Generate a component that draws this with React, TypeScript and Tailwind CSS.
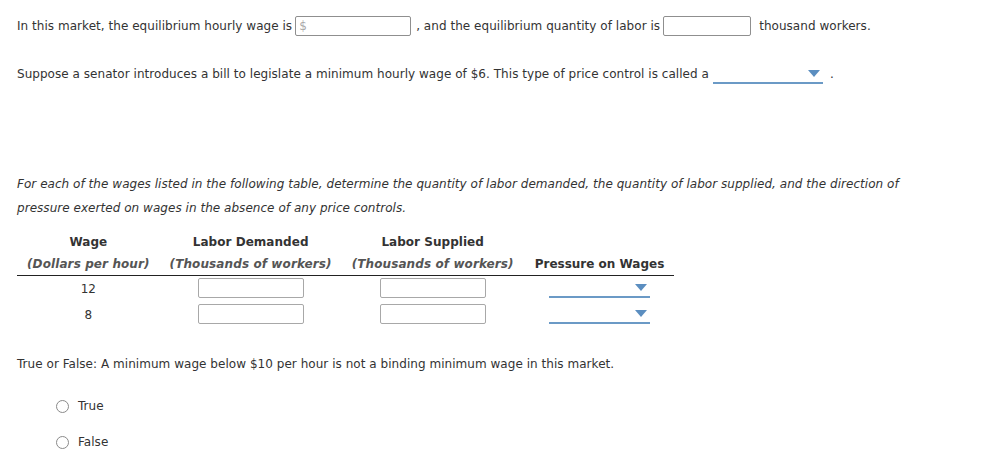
import React from 'react';

function Caret() {
  return (
    <svg width="12" height="7" viewBox="0 0 12 7" className="block">
      <path d="M0 0 L12 0 L6 7 Z" fill="#5b8ec0" />
    </svg>
  );
}

function Dropdown({ width }: { width: string }) {
  return (
    <div className={`relative h-[20px] ${width} border-b-2 border-[#6b9ac6]`}>
      <div className="absolute right-[3px] top-[6px]">
        <Caret />
      </div>
    </div>
  );
}

function Radio({ label }: { label: string }) {
  return (
    <label className="flex items-center h-[20px] pl-[39px]">
      <span className="inline-block w-[13px] h-[13px] rounded-full border border-[#8a8a8a] bg-white" />
      <span className="ml-[9px]">{label}</span>
    </label>
  );
}

export default function App() {
  return (
    <div
      className="min-h-screen bg-white text-[12px] text-[#333] pl-[17px] tracking-[0.04px]"
      style={{ fontFamily: '"DejaVu Sans", Verdana, sans-serif' }}
    >
      <div className="flex items-center h-[20px] mt-[16px] whitespace-nowrap">
        <span>In this market, the equilibrium hourly wage is</span>
        <div className="ml-[3px] w-[116px] h-[20px] border border-[#8f8f8f] rounded-[2px] flex items-center pl-[3px] text-[#aaa]">
          $
        </div>
        <span className="ml-[5px]">, and the equilibrium quantity of labor is</span>
        <div className="ml-[3px] w-[88px] h-[20px] border border-[#8f8f8f] rounded-[2px]" />
        <span className="ml-[8px]">thousand workers.</span>
      </div>

      <div className="flex items-center h-[20px] mt-[28px] whitespace-nowrap">
        <span>Suppose a senator introduces a bill to legislate a minimum hourly wage of $6. This type of price control is called a</span>
        <div className="ml-[4px]">
          <Dropdown width="w-[110px]" />
        </div>
        <span className="ml-[7px]">.</span>
      </div>

      <p className="mt-[88px] italic leading-[24px] text-[#333] pr-[60px]">
        For each of the wages listed in the following table, determine the quantity of labor demanded, the quantity of labor supplied, and the direction of pressure exerted on wages in the absence of any price controls.
      </p>

      <table className="mt-[11px] border-collapse">
        <thead>
          <tr className="h-[22px]">
            <th className="px-[10px] font-bold text-center">Wage</th>
            <th className="px-[10px] font-bold text-center">Labor Demanded</th>
            <th className="px-[10px] font-bold text-center">Labor Supplied</th>
            <th className="px-[10px]" />
          </tr>
          <tr className="h-[22px] border-b border-[#222]">
            <th className="px-[10px] font-bold italic text-[#555] whitespace-nowrap tracking-[0.1px]">(Dollars per hour)</th>
            <th className="px-[10px] font-bold italic text-[#555] whitespace-nowrap tracking-[0.1px]">(Thousands of workers)</th>
            <th className="px-[10px] font-bold italic text-[#555] whitespace-nowrap tracking-[0.1px]">(Thousands of workers)</th>
            <th className="pl-[11px] pr-[10px] font-bold whitespace-nowrap tracking-normal">Pressure on Wages</th>
          </tr>
        </thead>
        <tbody>
          {['12', '8'].map((w) => (
            <tr key={w} className="h-[26px]">
              <td className="text-center pt-[1px]">{w}</td>
              <td>
                <div className="mx-auto w-[106px] h-[20px] border border-[#a8a8a8] rounded-[2px]" />
              </td>
              <td>
                <div className="mx-auto w-[106px] h-[20px] border border-[#a8a8a8] rounded-[2px]" />
              </td>
              <td>
                <div className="mx-auto w-[101px]">
                  <Dropdown width="w-[101px]" />
                </div>
              </td>
            </tr>
          ))}
        </tbody>
      </table>

      <div className="flex items-center h-[20px] mt-[27px]">
        True or False: A minimum wage below $10 per hour is not a binding minimum wage in this market.
      </div>

      <div className="mt-[22px]">
        <Radio label="True" />
      </div>
      <div className="mt-[16px]">
        <Radio label="False" />
      </div>
    </div>
  );
}
